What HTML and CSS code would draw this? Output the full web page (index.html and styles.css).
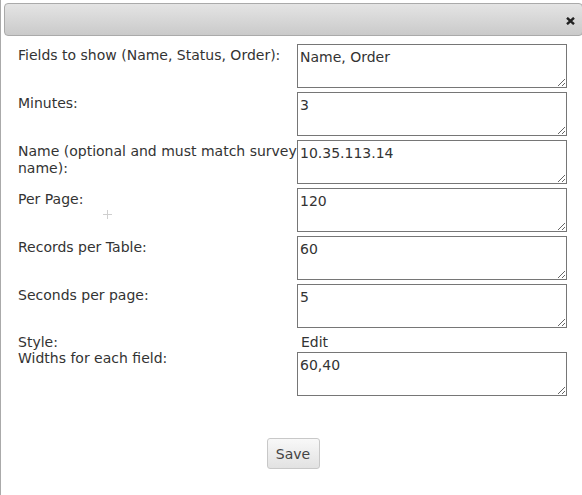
FILE: index.html
```html
<!DOCTYPE html>
<html lang="en">
<head>
  <meta charset="UTF-8">
  <title>Display settings</title>
  <link rel="stylesheet" href="styles.css">
</head>
<body>
  <div class="dialog">
    <div class="titlebar">
      <span class="close" title="Close">
        <svg width="9" height="8" viewBox="0 0 9 8"><path d="M1 0.8 L8 7.2 M8 0.8 L1 7.2" stroke="#222" stroke-width="2.4" stroke-linecap="butt"/></svg>
      </span>
    </div>

    <div class="content">
      <div class="form">
        <label class="label">Fields to show (Name, Status, Order):</label>
        <textarea class="field">Name, Order</textarea>

        <label class="label">Minutes:</label>
        <textarea class="field">3</textarea>

        <label class="label">Name (optional and must match survey name):</label>
        <textarea class="field">10.35.113.14</textarea>

        <label class="label">Per Page:
          <span class="cursor"><svg width="9" height="9" viewBox="0 0 9 9"><path d="M4.5 0 V9 M0 4.5 H9" stroke="#cfcfcf" stroke-width="1"/></svg></span>
        </label>
        <textarea class="field">120</textarea>

        <label class="label">Records per Table:</label>
        <textarea class="field">60</textarea>

        <label class="label">Seconds per page:</label>
        <textarea class="field">5</textarea>

        <span class="label plain">Style:</span>
        <span class="value plain">Edit</span>

        <label class="label raised">Widths for each field:</label>
        <textarea class="field">60,40</textarea>
      </div>

      <div class="actions">
        <button class="btn">Save</button>
      </div>
    </div>
  </div>
</body>
</html>
```

FILE: styles.css
```css
body {
  margin: 0;
  background: #fff;
  font-family: "DejaVu Sans", Verdana, sans-serif;
  font-size: 14px;
  color: #333;
}
.dialog {
  height: 495px;
  border-left: 1px solid #aaa;
  padding: 3px 0 0 3px;
  box-sizing: border-box;
  overflow: hidden;
}
.titlebar {
  height: 33px;
  border: 1px solid #aaa;
  border-radius: 4px;
  background: linear-gradient(#e4e4e4, #cacaca);
  box-sizing: border-box;
  display: flex;
  align-items: center;
  justify-content: flex-end;
  padding: 3px 7px 0 0;
  margin-right: -1px;
}
.close { display: flex; }

.content { padding: 8px 0 0 14px; }
.form {
  display: grid;
  grid-template-columns: 279px 270px;
  row-gap: 4px;
}
.label {
  padding-top: 3px;
  margin-right: -12px;
  line-height: 17px;
}
.plain {
  box-sizing: border-box;
  height: 16px;
  padding-top: 2px;
}
.raised {
  padding-top: 0;
  margin-top: -2px;
}
.cursor {
  display: block;
  margin: 2px 0 0 85px;
  height: 9px;
  line-height: 0;
}
.value {
  padding-left: 4px;
  line-height: 17px;
}
.field {
  display: block;
  width: 270px;
  height: 44px;
  box-sizing: border-box;
  margin: 0;
  padding: 4px 2px 2px;
  border: 1px solid #767676;
  font-family: "DejaVu Sans", Verdana, sans-serif;
  font-size: 14px;
  color: #333;
  line-height: 17px;
}
.actions {
  display: flex;
  justify-content: center;
  padding: 42px 0 0 0;
  margin-left: -14px;
}
.btn {
  width: 53px;
  height: 31px;
  border: 1px solid #c8c8c8;
  border-radius: 3px;
  background: linear-gradient(#f8f8f8, #e2e2e2);
  font-family: "DejaVu Sans", Verdana, sans-serif;
  font-size: 14px;
  color: #444;
  padding: 0;
  cursor: pointer;
}
```
